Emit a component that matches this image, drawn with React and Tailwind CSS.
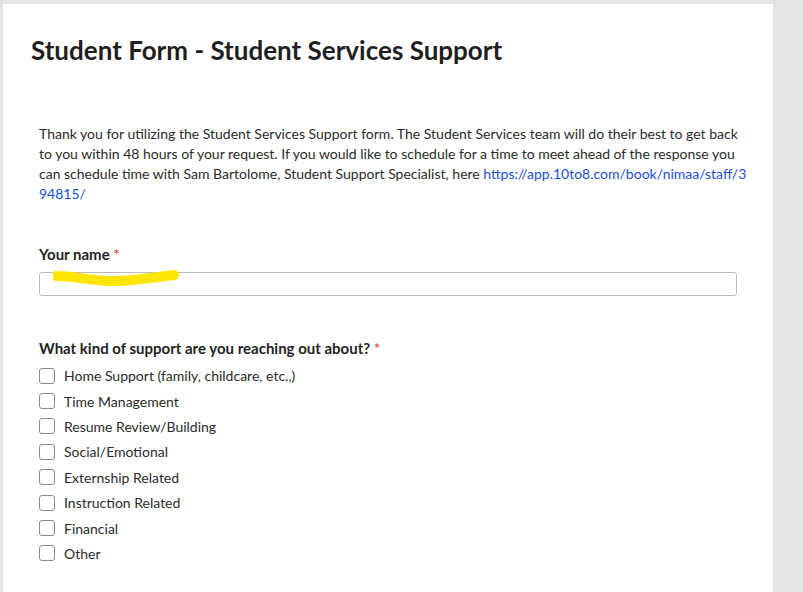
import React from 'react';

const options = [
  'Home Support (family, childcare, etc.,)',
  'Time Management',
  'Resume Review/Building',
  'Social/Emotional',
  'Externship Related',
  'Instruction Related',
  'Financial',
  'Other',
];

function Scribble() {
  return (
    <svg
      className="absolute left-[14px] top-[-4px]"
      width="126"
      height="20"
      viewBox="0 0 126 20"
    >
      <path
        d="M3 8 C 20 8, 35 12, 55 13 C 75 14, 95 10, 121 7"
        stroke="#ffe600"
        strokeWidth="10"
        strokeLinecap="round"
        fill="none"
      />
    </svg>
  );
}

export default function App() {
  return (
    <div className="w-[803px] h-[592px] overflow-hidden bg-[#e4e5e4] pt-[4px] pl-[3px] font-['Lato','Liberation_Sans',sans-serif] text-[#222]">
      <div className="w-[770px] h-[600px] bg-white pt-[30px]">
        <h1 className="pl-[28px] text-[26px] leading-[32px] font-bold text-[#1f1f1f]">
          Student Form - Student Services Support
        </h1>

        <p className="mt-[58px] pl-[36px] pr-[23px] text-[14px] leading-[20px] text-[#2b2b2b]">
          Thank you for utilizing the Student Services Support form. The Student Services team will do their best to get back
          to you within 48 hours of your request. If you would like to schedule for a time to meet ahead of the response you
          can schedule time with Sam Bartolome, Student Support Specialist, here{' '}
          <a href="#" className="text-[#1a4fd6] break-all">https://app.10to8.com/book/nimaa/staff/394815/</a>
        </p>

        <div className="mt-[40px] pl-[36px]">
          <div className="text-[15px] leading-[20px] font-bold text-[#1f1f1f]">
            Your name <span className="text-[#d93025] font-normal">*</span>
          </div>
          <div className="relative mt-[8px] w-[698px]">
            <div className="h-[24px] border border-[#bcbcbc] rounded-[3px] bg-white"></div>
            <Scribble />
          </div>
        </div>

        <div className="mt-[42px] pl-[36px]">
          <div className="text-[15px] leading-[20px] font-bold text-[#1f1f1f]">
            What kind of support are you reaching out about? <span className="text-[#d93025] font-normal">*</span>
          </div>
          <div className="mt-[5px] flex flex-col">
            {options.map((o) => (
              <label key={o} className="flex items-center h-[25.4px] gap-[9px] text-[14px] text-[#2b2b2b]">
                <span className="w-[16px] h-[16px] border border-[#8a8a8a] rounded-[3px] bg-white shrink-0"></span>
                {o}
              </label>
            ))}
          </div>
        </div>
      </div>
    </div>
  );
}
